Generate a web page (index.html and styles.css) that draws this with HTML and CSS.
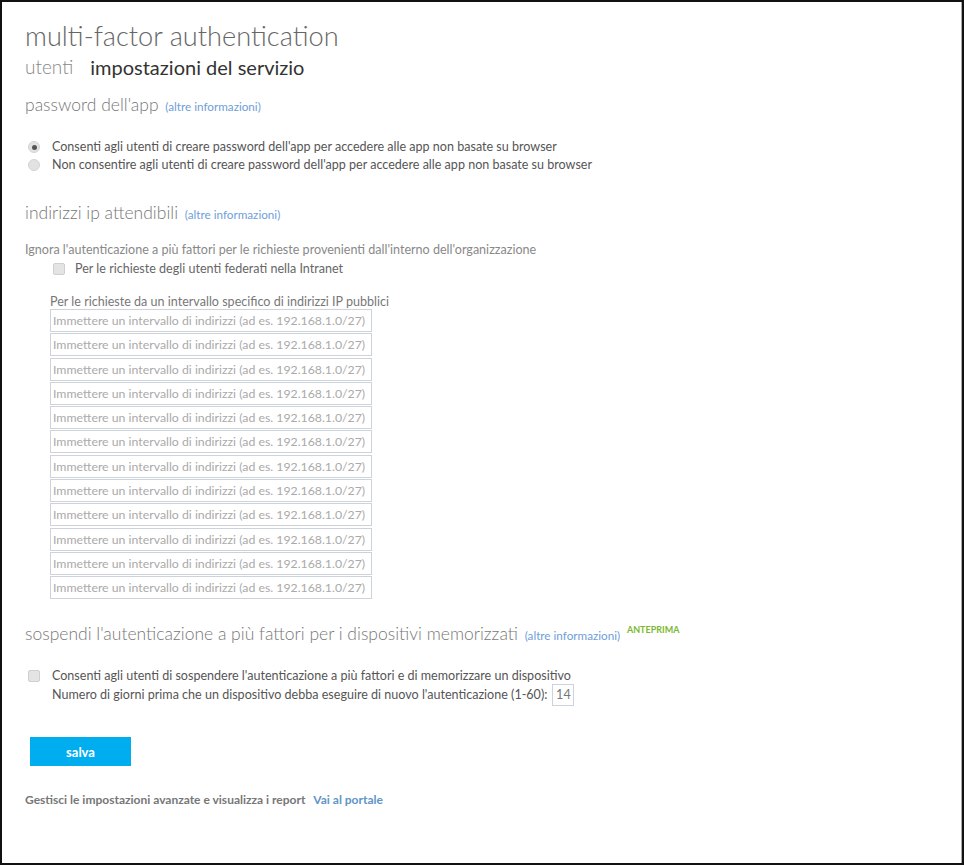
FILE: index.html
```html
<!DOCTYPE html>
<html lang="it">
<head>
<meta charset="utf-8">
<title>multi-factor authentication</title>
<link rel="stylesheet" href="styles.css">
</head>
<body>
<div class="frame">
  <div class="page">
    <h1 class="title">multi-factor authentication</h1>
    <nav class="tabs">
      <span class="tab">utenti</span>
      <span class="tab active">impostazioni del servizio</span>
    </nav>

    <section class="sec sec-app">
      <h2 class="heading">password dell'app <a class="more">(altre informazioni)</a></h2>
      <div class="options">
        <label class="opt"><span class="radio checked"></span><span class="txt">Consenti agli utenti di creare password dell'app per accedere alle app non basate su browser</span></label>
        <label class="opt"><span class="radio"></span><span class="txt">Non consentire agli utenti di creare password dell'app per accedere alle app non basate su browser</span></label>
      </div>
    </section>

    <section class="sec sec-ip">
      <h2 class="heading">indirizzi ip attendibili <a class="more">(altre informazioni)</a></h2>
      <p class="desc">Ignora l'autenticazione a più fattori per le richieste provenienti dall'interno dell'organizzazione</p>
      <label class="opt opt-fed"><span class="check"></span><span class="txt">Per le richieste degli utenti federati nella Intranet</span></label>
      <div class="ranges">
        <p class="sub">Per le richieste da un intervallo specifico di indirizzi IP pubblici</p>
        <div class="inputs">
          <div class="ipbox">Immettere un intervallo di indirizzi (ad es. 192.168.1.0/27)</div>
          <div class="ipbox">Immettere un intervallo di indirizzi (ad es. 192.168.1.0/27)</div>
          <div class="ipbox">Immettere un intervallo di indirizzi (ad es. 192.168.1.0/27)</div>
          <div class="ipbox">Immettere un intervallo di indirizzi (ad es. 192.168.1.0/27)</div>
          <div class="ipbox">Immettere un intervallo di indirizzi (ad es. 192.168.1.0/27)</div>
          <div class="ipbox">Immettere un intervallo di indirizzi (ad es. 192.168.1.0/27)</div>
          <div class="ipbox">Immettere un intervallo di indirizzi (ad es. 192.168.1.0/27)</div>
          <div class="ipbox">Immettere un intervallo di indirizzi (ad es. 192.168.1.0/27)</div>
          <div class="ipbox">Immettere un intervallo di indirizzi (ad es. 192.168.1.0/27)</div>
          <div class="ipbox">Immettere un intervallo di indirizzi (ad es. 192.168.1.0/27)</div>
          <div class="ipbox">Immettere un intervallo di indirizzi (ad es. 192.168.1.0/27)</div>
          <div class="ipbox">Immettere un intervallo di indirizzi (ad es. 192.168.1.0/27)</div>
        </div>
      </div>
    </section>

    <section class="sec sec-rem">
      <h2 class="heading">sospendi l'autenticazione a più fattori per i dispositivi memorizzati <a class="more">(altre informazioni)</a> <span class="preview">ANTEPRIMA</span></h2>
      <div class="remember">
        <span class="check"></span>
        <div class="rem-text">
          <span class="txt">Consenti agli utenti di sospendere l'autenticazione a più fattori e di memorizzare un dispositivo</span>
          <div class="days"><span class="txt">Numero di giorni prima che un dispositivo debba eseguire di nuovo l'autenticazione (1-60):</span><span class="daybox">14</span></div>
        </div>
      </div>
    </section>

    <button class="save">salva</button>

    <p class="footer">Gestisci le impostazioni avanzate e visualizza i report <a class="portal">Vai al portale</a></p>
  </div>
</div>
</body>
</html>
```

FILE: styles.css
```css
* { box-sizing: border-box; }
html, body { margin: 0; padding: 0; background: #fff; }
body { font-family: "Lato", "Open Sans", sans-serif; color: #555; }

.frame {
  width: 964px;
  height: 865px;
  border: 2px solid #111;
  box-shadow: inset -1px 0 0 #aaa;
  overflow: hidden;
}

.page {
  padding: 17px 0 0 23px;
  display: flex;
  flex-direction: column;
  align-items: flex-start;
}

.title {
  margin: 0;
  font-weight: 300;
  font-size: 27.2px;
  line-height: 34px;
  color: #666;
}

.tabs {
  display: flex;
  gap: 17px;
  margin-top: 2px;
  font-size: 20px;
  line-height: 24px;
}
.tab { font-weight: 300; color: #888; font-size: 19px; }
.tab.active { font-weight: 400; color: #333; font-size: 20px; }

.sec { display: flex; flex-direction: column; align-items: flex-start; }

.heading {
  margin: 0;
  font-weight: 300;
  font-size: 17.5px;
  line-height: 22px;
  color: #777;
}
.more {
  font-size: 11.7px;
  color: #6f9ed8;
  font-weight: 400;
  margin-left: 2px;
}

.sec-app { margin-top: 15px; }
.options { display: flex; flex-direction: column; margin-top: 21px; margin-left: 3px; gap: 0; }

.opt { display: flex; align-items: center; font-size: 12.55px; color: #555; line-height: 18px; }

.radio {
  width: 12px; height: 12px; border-radius: 50%;
  background: #e2e2e2;
  border: 1px solid #d4d4d4;
  margin-right: 12px;
  position: relative;
  flex: none;
}
.radio.checked::after {
  content: "";
  position: absolute;
  left: 2.5px; top: 2.5px;
  width: 5px; height: 5px; border-radius: 50%;
  background: #555;
}

.check {
  width: 12px; height: 12px;
  border-radius: 2px;
  background: #e4e4e4;
  border: 1px solid #cfcfcf;
  flex: none;
}

.sec-ip { margin-top: 28px; }
.desc { margin: 16px 0 0; font-size: 12.55px; line-height: 18px; color: #888; }
.opt-fed { margin-left: 28px; margin-top: 1px; color: #666; }
.opt-fed .check { margin-right: 10px; }

.ranges { margin-left: 25px; margin-top: 16px; }
.sub { margin: 0; font-size: 12.55px; line-height: 15px; color: #777; }
.inputs { display: flex; flex-direction: column; gap: 1.3px; margin-top: 0; }
.ipbox {
  width: 322px; height: 23px;
  border: 1px solid #cdd3da;
  font-size: 12.3px;
  line-height: 21px;
  color: #aaa;
  padding-left: 2px;
  white-space: nowrap;
  overflow: hidden;
}

.sec-rem { margin-top: 20px; }
.preview {
  font-size: 9px; font-weight: 700; color: #7cb82f;
  vertical-align: 7px; margin-left: 2px;
}
.remember { display: flex; align-items: flex-start; margin-top: 21px; margin-left: 3px; }
.remember .check { margin-top: 3px; margin-right: 12px; }
.rem-text { display: flex; flex-direction: column; font-size: 12.55px; line-height: 18px; color: #555; }
.days { display: flex; align-items: center; gap: 5px; margin-top: -1px; }
.daybox {
  width: 22px; height: 22px;
  border: 1px solid #cdd3da;
  display: flex; align-items: center; justify-content: center;
  color: #777;
}

.save {
  margin-top: 31px;
  margin-left: 5px;
  width: 101px; height: 29px;
  background: #00adef;
  border: none;
  color: #fff;
  font-family: "Lato", "Open Sans", sans-serif;
  font-size: 13px;
  font-weight: 700;
  padding: 0;
}

.footer {
  margin: 26px 0 0;
  font-size: 12px;
  font-weight: 700;
  color: #777;
  line-height: 16px;
}
.portal { color: #5d95c8; margin-left: 5px; }
```
